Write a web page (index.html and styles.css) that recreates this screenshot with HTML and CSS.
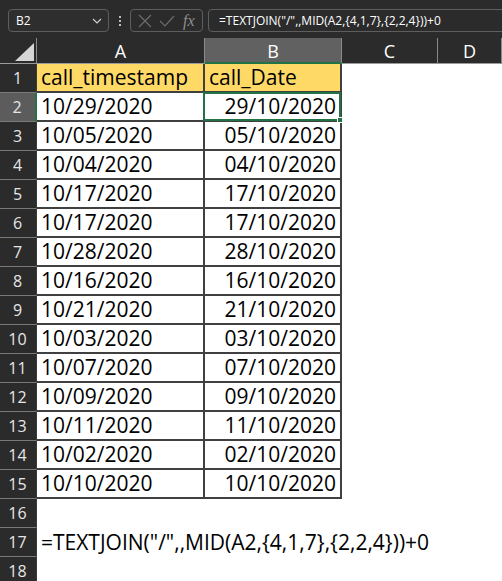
FILE: index.html
```html
<!DOCTYPE html>
<html>
<head>
<meta charset="utf-8">
<link rel="stylesheet" href="styles.css">
</head>
<body>
<div class="app">
  <div class="toolbar">
    <div class="namebox">
      <span class="nb-text">B2</span>
      <svg class="chev" width="10" height="6" viewBox="0 0 10 6"><polyline points="1,1 5,5 9,1" fill="none" stroke="#cfcfcf" stroke-width="1.2"/></svg>
    </div>
    <div class="dots"><i></i><i></i><i></i></div>
    <div class="fnbox">
      <svg width="14" height="14" viewBox="0 0 14 14"><path d="M1 1 L13 13 M13 1 L1 13" stroke="#6c6c6c" stroke-width="1.2" fill="none"/></svg>
      <svg width="16" height="12" viewBox="0 0 16 12"><path d="M1 6 L6 11 L15 1" stroke="#6c6c6c" stroke-width="1.2" fill="none"/></svg>
      <span class="fx">fx</span>
    </div>
    <div class="formula">=TEXTJOIN("/",,MID(A2,{4,1,7},{2,2,4}))+0</div>
  </div>
  <div class="sheet">
    <div class="corner"><svg width="37" height="25" viewBox="0 0 37 25"><polygon points="34,5 34,23 15,23" fill="#d6d6d6"/></svg></div>
    <div class="ch">A</div>
    <div class="ch sel">B</div>
    <div class="ch">C</div>
    <div class="ch">D</div>

    <div class="rh">1</div><div class="c t y">call_timestamp</div><div class="c t y">call_Date</div><div class="c"></div><div class="c"></div>
    <div class="rh sel">2</div><div class="c t">10/29/2020</div><div class="c t r active">29/10/2020<span class="selbox"><span class="handle"></span></span></div><div class="c"></div><div class="c"></div>
    <div class="rh">3</div><div class="c t">10/05/2020</div><div class="c t r">05/10/2020</div><div class="c"></div><div class="c"></div>
    <div class="rh">4</div><div class="c t">10/04/2020</div><div class="c t r">04/10/2020</div><div class="c"></div><div class="c"></div>
    <div class="rh">5</div><div class="c t">10/17/2020</div><div class="c t r">17/10/2020</div><div class="c"></div><div class="c"></div>
    <div class="rh">6</div><div class="c t">10/17/2020</div><div class="c t r">17/10/2020</div><div class="c"></div><div class="c"></div>
    <div class="rh">7</div><div class="c t">10/28/2020</div><div class="c t r">28/10/2020</div><div class="c"></div><div class="c"></div>
    <div class="rh">8</div><div class="c t">10/16/2020</div><div class="c t r">16/10/2020</div><div class="c"></div><div class="c"></div>
    <div class="rh">9</div><div class="c t">10/21/2020</div><div class="c t r">21/10/2020</div><div class="c"></div><div class="c"></div>
    <div class="rh">10</div><div class="c t">10/03/2020</div><div class="c t r">03/10/2020</div><div class="c"></div><div class="c"></div>
    <div class="rh">11</div><div class="c t">10/07/2020</div><div class="c t r">07/10/2020</div><div class="c"></div><div class="c"></div>
    <div class="rh">12</div><div class="c t">10/09/2020</div><div class="c t r">09/10/2020</div><div class="c"></div><div class="c"></div>
    <div class="rh">13</div><div class="c t">10/11/2020</div><div class="c t r">11/10/2020</div><div class="c"></div><div class="c"></div>
    <div class="rh">14</div><div class="c t">10/02/2020</div><div class="c t r">02/10/2020</div><div class="c"></div><div class="c"></div>
    <div class="rh">15</div><div class="c t">10/10/2020</div><div class="c t r">10/10/2020</div><div class="c"></div><div class="c"></div>
    <div class="rh">16</div><div class="c"></div><div class="c"></div><div class="c"></div><div class="c"></div>
    <div class="rh">17</div><div class="c over">=TEXTJOIN("/",,MID(A2,{4,1,7},{2,2,4}))+0</div><div class="c"></div><div class="c"></div><div class="c"></div>
    <div class="rh">18</div><div class="c"></div><div class="c"></div><div class="c"></div><div class="c"></div>
  </div>
</div>
</body>
</html>
```
FILE: styles.css
```css
* { box-sizing: border-box; }
html, body { margin: 0; padding: 0; }
body { width: 502px; height: 581px; overflow: hidden; background: #fff; font-family: "Open Sans", "Liberation Sans", sans-serif; }

.toolbar {
  height: 38px;
  background: #2b2b2b;
  display: flex;
  align-items: flex-start;
  padding: 9px 0 0 8px;
  overflow: hidden;
}
.namebox {
  width: 101px; height: 23px;
  border: 1px solid #5e5e5e; border-radius: 4px;
  background: #2e2e2e;
  display: flex; align-items: center; justify-content: space-between;
  padding: 0 6px 0 7px;
  flex: none;
}
.nb-text { color: #fff; font-size: 12px; }
.dots { width: 21px; height: 23px; display: flex; flex-direction: column; align-items: center; justify-content: center; gap: 2px; flex: none; }
.dots i { display: block; width: 2px; height: 2px; background: #bdbdbd; }
.fnbox {
  width: 73px; height: 23px; flex: none;
  border: 1px solid #5e5e5e; border-radius: 4px;
  display: flex; align-items: center; gap: 7px;
  padding: 0 0 0 7px;
}
.fx { font-family: "Liberation Serif", serif; font-style: italic; color: #8e8e8e; font-size: 16px; margin-left: 1px; }
.formula {
  margin-left: 5px; flex: none; width: 320px; height: 23px;
  border: 1px solid #5e5e5e; border-radius: 4px;
  color: #fff; font-size: 12px; line-height: 21px; padding-left: 10px;
  white-space: nowrap;
}

.sheet {
  display: grid;
  grid-template-columns: 37px 168px 137px 96px 1fr;
  grid-template-rows: 26px repeat(18, 29px);
}
.corner { background: #2b2b2b; border-right: 1px solid #8a8a8a; border-bottom: 1px solid #9a9a9a; }
.corner svg { display: block; }
.ch {
  background: #2b2b2b; color: #fff; font-size: 18px;
  border-right: 1px solid #8a8a8a; border-bottom: 1px solid #9a9a9a;
  display: flex; align-items: center; justify-content: center;
  padding-top: 1px;
}
.ch.sel { background: #616161; border-bottom: 2px solid #217346; padding-top: 2px; }
.rh {
  background: #2b2b2b; color: #e6e6e6; font-size: 16px;
  border-right: 1px solid #3a3a3a; border-bottom: 1px solid #7a7a7a;
  display: flex; align-items: center; justify-content: center;
  padding-right: 1px;
}
.rh.sel { background: #5c5c5c; border-right: 2px solid #217346; }
.c { background: #fff; color: #000; font-size: 21px; white-space: nowrap; display: flex; align-items: center; padding: 0 0 1px 4px; }
.c.t { border-right: 2px solid #404040; border-bottom: 2px solid #404040; }
.c.y { background: #ffd966; }
.c.r { justify-content: flex-end; padding-right: 4px; }
.c.over { overflow: visible; position: relative; z-index: 1; background: transparent; }
.active { position: relative; }
.selbox {
  position: absolute; top: -1px; left: -2px; right: -1px; bottom: -1px;
  border: 2px solid #217346;
}
.handle {
  position: absolute; right: -4px; bottom: -4px; width: 6px; height: 6px;
  background: #217346; border: 1px solid #fff;
}
```
